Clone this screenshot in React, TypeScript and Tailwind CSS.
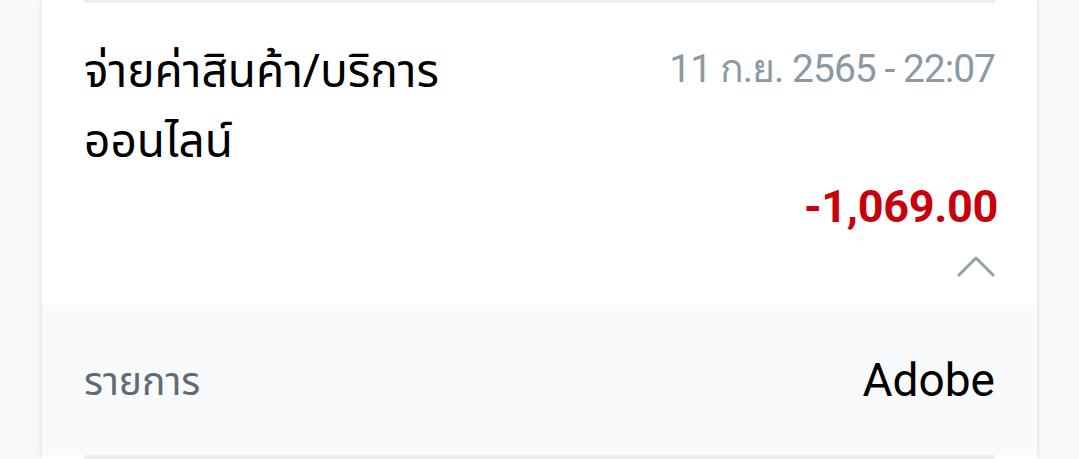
const App: React.FC = () => {
    return (
        <div
            className="w-full h-[459px] overflow-hidden bg-[#f8f9fb] px-[42px]"
            style={{ fontFamily: '"Noto Sans", "Noto Sans Thai", Roboto, sans-serif' }}
        >
            <div className="h-full bg-white shadow-[0_0_6px_rgba(0,0,0,0.12)] flex flex-col">
                <div className="mx-[42px] h-[3px] bg-[#eeeeee]" />
                <div className="px-[42px] pt-[31px] flex justify-between items-start">
                    <p className="text-[46px] leading-[70px] text-black">
                        จ่ายค่าสินค้า/บริการ
                        <br />
                        ออนไลน์
                    </p>
                    <p className="font-[Roboto,'Noto_Sans',sans-serif] text-[39px] leading-[70px] text-[#8a9aa4] tracking-[-1px]">
                        11 ก.ย. 2565 - 22:07
                    </p>
                </div>
                <div className="px-[42px] pt-[5px] flex justify-end">
                    <p className="-mr-[3px] font-[Roboto,sans-serif] text-[45px] leading-[56px] font-bold text-[#c8000a] tracking-[-0.3px]">-1,069.00</p>
                </div>
                <div className="px-[42px] flex justify-end pt-[20px] h-[70px]">
                    <svg width="38" height="22" viewBox="0 0 38 22" fill="none">
                        <polyline points="2,20 19,3 36,20" stroke="#90a0a6" strokeWidth="3" strokeLinecap="round" strokeLinejoin="round" />
                    </svg>
                </div>
                <div className="bg-[#f9fafc] grow flex items-center justify-between px-[42px]">
                    <p className="text-[39px] text-[#5f6b74]">รายการ</p>
                    <p className="font-[Roboto,sans-serif] text-[46px] text-black">Adobe</p>
                </div>
                <div className="h-[4px] flex">
                    <div className="w-[42px] bg-white" />
                    <div className="grow mr-[42px] bg-[#eeeeee]" />
                </div>
            </div>
        </div>
    )
}

export default App
